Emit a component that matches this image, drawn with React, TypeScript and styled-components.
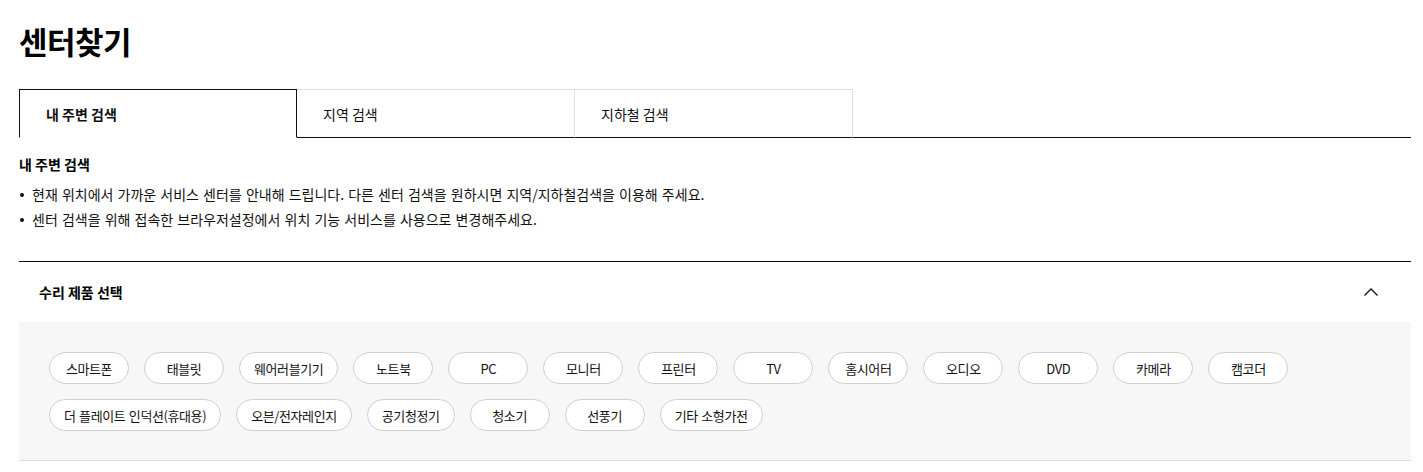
import styled, { createGlobalStyle } from 'styled-components';
import { useState } from 'react';

const GlobalStyle = createGlobalStyle`
  body {
    margin: 0;
    background: #fff;
    color: #000;
    font-family: 'Noto Sans CJK KR', 'Noto Sans', sans-serif;
  }
`;

const tabs = ['내 주변 검색', '지역 검색', '지하철 검색'];

const products = [
  '스마트폰',
  '태블릿',
  '웨어러블기기',
  '노트북',
  'PC',
  '모니터',
  '프린터',
  'TV',
  '홈시어터',
  '오디오',
  'DVD',
  '카메라',
  '캠코더',
  '더 플레이트 인덕션(휴대용)',
  '오븐/전자레인지',
  '공기청정기',
  '청소기',
  '선풍기',
  '기타 소형가전',
];

const notices = [
  '현재 위치에서 가까운 서비스 센터를 안내해 드립니다. 다른 센터 검색을 원하시면 지역/지하철검색을 이용해 주세요.',
  '센터 검색을 위해 접속한 브라우저설정에서 위치 기능 서비스를 사용으로 변경해주세요.',
];

export default function App() {
  const [activeTab, setActiveTab] = useState(0);
  const [open, setOpen] = useState(true);

  return (
    <>
      <GlobalStyle />
      <Page>
        <Title>센터찾기</Title>
        <TabList>
          {tabs.map((tab, index) => (
            <Tab
              key={tab}
              $active={index === activeTab}
              onClick={() => setActiveTab(index)}
            >
              {tab}
            </Tab>
          ))}
        </TabList>
        <Guide>
          <GuideTitle>{tabs[activeTab]}</GuideTitle>
          <NoticeList>
            {notices.map((notice) => (
              <Notice key={notice}>{notice}</Notice>
            ))}
          </NoticeList>
        </Guide>
        <Accordion>
          <AccordionHead onClick={() => setOpen(!open)}>
            <span>수리 제품 선택</span>
            <Chevron $open={open} width="16" height="10" viewBox="0 0 16 10">
              <path d="M1.5 8.5 L8 2 L14.5 8.5" fill="none" stroke="#111" strokeWidth="1.3" />
            </Chevron>
          </AccordionHead>
          {open && (
            <ChipPanel>
              {products.map((product) => (
                <Chip key={product}>{product}</Chip>
              ))}
            </ChipPanel>
          )}
        </Accordion>
      </Page>
    </>
  );
}

const Page = styled.div`
  padding: 21px 12px 0 19px;
`;

const Title = styled.h1`
  margin: 0;
  font-size: 31px;
  font-weight: 700;
  line-height: 40px;
  letter-spacing: -0.5px;
`;

const TabList = styled.div`
  display: flex;
  margin-top: 28px;
  border-bottom: 1px solid #111;
`;

const Tab = styled.button<{ $active: boolean }>`
  width: 278px;
  height: 49px;
  margin-bottom: -1px;
  padding: 0 0 0 26px;
  text-align: left;
  font-family: inherit;
  font-size: 14px;
  font-weight: ${({ $active }) => ($active ? 700 : 400)};
  color: #111;
  background: #fff;
  cursor: pointer;
  border: 1px solid ${({ $active }) => ($active ? '#111' : '#ddd')};
  border-bottom: 1px solid ${({ $active }) => ($active ? '#fff' : '#111')};
  & + & {
    border-left: none;
  }
`;

const Guide = styled.div`
  padding-top: 16px;
`;

const GuideTitle = styled.h3`
  margin: 0;
  font-size: 14px;
  font-weight: 700;
  line-height: 20px;
`;

const NoticeList = styled.ul`
  margin: 8px 0 0;
  padding: 0;
  list-style: none;
`;

const Notice = styled.li`
  position: relative;
  padding-left: 13px;
  font-size: 14px;
  line-height: 25px;
  color: #111;
  word-spacing: 1px;
  &::before {
    content: '';
    position: absolute;
    left: 1px;
    top: 11px;
    width: 4px;
    height: 4px;
    border-radius: 50%;
    background: #111;
  }
`;

const Accordion = styled.section`
  margin-top: 29px;
  border-top: 1px solid #111;
  border-bottom: 1px solid #ddd;
`;

const AccordionHead = styled.div`
  display: flex;
  align-items: center;
  justify-content: space-between;
  height: 60px;
  padding: 0 32px 0 20px;
  font-size: 14px;
  font-weight: 700;
  cursor: pointer;
`;

const Chevron = styled.svg<{ $open: boolean }>`
  transform: rotate(${({ $open }) => ($open ? '0deg' : '180deg')});
`;

const ChipPanel = styled.div`
  display: flex;
  flex-wrap: wrap;
  gap: 15px 15px;
  padding: 30px 30px 29px 30px;
  background: #f7f7f7;
`;

const Chip = styled.button`
  box-sizing: border-box;
  min-width: 80px;
  height: 32px;
  padding: 0 14px;
  font-family: inherit;
  font-size: 13px;
  letter-spacing: -0.4px;
  word-spacing: 1px;
  color: #111;
  background: #fff;
  border: 1px solid #d0d0d0;
  border-radius: 16px;
  cursor: pointer;
  white-space: nowrap;
`;
